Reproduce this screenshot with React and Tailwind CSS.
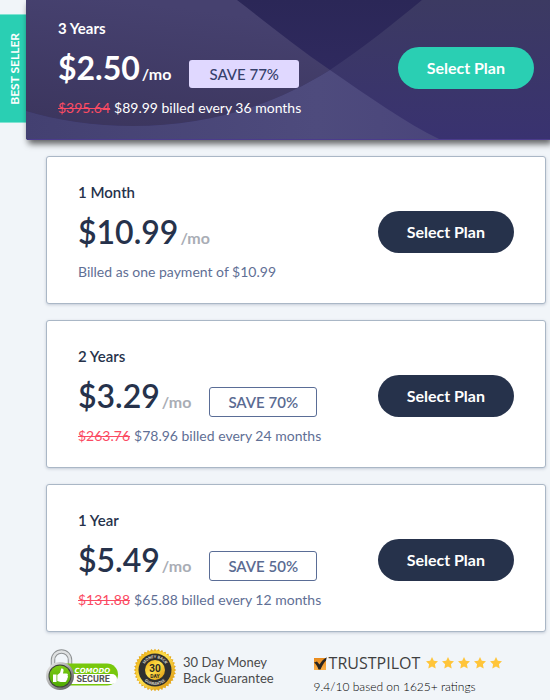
import { clsx } from "clsx";

const plans = [
  {
    id: "1m",
    title: "1 Month",
    price: "$10.99",
    detail: "Billed as one payment of $10.99",
  },
  {
    id: "2y",
    title: "2 Years",
    price: "$3.29",
    save: "SAVE 70%",
    oldPrice: "$263.76",
    detail: "$78.96 billed every 24 months",
  },
  {
    id: "1y",
    title: "1 Year",
    price: "$5.49",
    save: "SAVE 50%",
    oldPrice: "$131.88",
    detail: "$65.88 billed every 12 months",
  },
];

const bestPlan = {
  title: "3 Years",
  price: "$2.50",
  save: "SAVE 77%",
  oldPrice: "$395.64",
  detail: "$89.99 billed every 36 months",
};

const PlanBody = ({ plan, featured = false }) => (
  <div className="flex items-center justify-between">
    <div>
      <h2
        className={clsx(
          "text-[15px] leading-6",
          featured ? "font-bold text-white" : "font-semibold text-[#26324b]"
        )}
      >
        {plan.title}
      </h2>
      <div className="flex h-14 items-baseline">
        <span
          className={clsx(
            "text-[32px] leading-14",
            featured ? "font-bold text-white" : "font-semibold text-[#26324b]"
          )}
        >
          {plan.price}
        </span>
        <span
          className={clsx(
            "ml-0.5 text-base font-bold",
            featured ? "text-white" : "text-[#a9adb5]"
          )}
        >
          /mo
        </span>
        {plan.save && (
          <span
            className={clsx(
              "ml-[18px] rounded-[3px] text-[15px] leading-7",
              featured
                ? "bg-[#e0d8ff] px-5 font-medium text-[#36406b]"
                : "border border-[#5a6d96] px-[18px] font-semibold text-[#5a6b92]"
            )}
          >
            {plan.save}
          </span>
        )}
      </div>
      <p
        className={clsx(
          "text-sm leading-6",
          featured ? "text-white" : "text-[#5f6f95]"
        )}
      >
        {plan.oldPrice && (
          <s className="mr-1 text-[#fb4b63]">{plan.oldPrice}</s>
        )}
        {plan.detail}
      </p>
    </div>
    <button
      type="button"
      className={clsx(
        "h-[42px] rounded-full px-[29px] text-base font-bold text-white",
        featured ? "bg-[#2acfb3]" : "bg-[#26324b]"
      )}
    >
      Select Plan
    </button>
  </div>
);

const CardBackdrop = () => (
  <svg
    className="absolute inset-0 h-full w-full"
    viewBox="0 0 524 140"
    preserveAspectRatio="none"
    aria-hidden="true"
  >
    <defs>
      <linearGradient id="base" x1="0" y1="0" x2="0" y2="1">
        <stop offset="0" stopColor="#2b2757" />
        <stop offset="1" stopColor="#332c66" />
      </linearGradient>
      <linearGradient id="left" x1="0.3" y1="0" x2="0" y2="1">
        <stop offset="0" stopColor="#46416f" />
        <stop offset="1" stopColor="#3b355d" />
      </linearGradient>
      <linearGradient id="right" x1="0" y1="0" x2="0" y2="1">
        <stop offset="0" stopColor="#3c3a62" />
        <stop offset="1" stopColor="#393270" />
      </linearGradient>
      <linearGradient id="overlap" x1="0" y1="0" x2="1" y2="0">
        <stop offset="0" stopColor="#434071" />
        <stop offset="0.7" stopColor="#4e4b7d" />
        <stop offset="1" stopColor="#4a457b" />
      </linearGradient>
    </defs>
    <rect width="524" height="140" fill="url(#base)" />
    <path
      d="M396 0C368 23 337 48 304 70C240 110 175 126 107 126C68 126 30 120 0 111V140H524V0Z"
      fill="url(#right)"
    />
    <path d="M0 0H211C241 23 272 48 304 70C240 110 175 126 107 126C68 126 30 120 0 111Z" fill="url(#left)" />
    <path
      d="M0 111C30 120 68 126 107 126C175 126 240 110 304 70C342 96 378 122 415 140H0Z"
      fill="url(#overlap)"
    />
    <rect y="139" width="524" height="1" fill="#4b3b8c" />
  </svg>
);

const ComodoBadge = () => (
  <svg width="73" height="42" viewBox="0 0 73 42" role="img" aria-label="Comodo Secure">
    <defs>
      <linearGradient id="steel" x1="0" y1="0" x2="1" y2="1">
        <stop offset="0" stopColor="#f4f4f4" />
        <stop offset="0.5" stopColor="#a5a5a5" />
        <stop offset="1" stopColor="#4a4a4a" />
      </linearGradient>
      <linearGradient id="green" x1="0" y1="0" x2="0" y2="1">
        <stop offset="0" stopColor="#7ccb14" />
        <stop offset="1" stopColor="#4faa04" />
      </linearGradient>
    </defs>
    <path d="M7 19V12a8.500 8.500 0 0 1 17 0v7" fill="none" stroke="#8d9092" strokeWidth="4.500" />
    <path d="M7 19V12a8.500 8.500 0 0 1 17 0v7" fill="none" stroke="#dfe1e2" strokeWidth="2.500" />
    <path d="M18 15.500H61a11 11 0 0 1 0 22H18Z" fill="#78c80c" />
    <path d="M24 26H66a5 5 0 0 1 0 10H24Z" fill="#fff" />
    <circle cx="14" cy="28" r="14" fill="url(#steel)" />
    <circle cx="14" cy="28" r="11.500" fill="#3c4138" />
    <circle cx="14" cy="28" r="10.500" fill="url(#green)" />
    <path
      d="M7 26.500h3.500V34H7ZM11.300 27l2.800-2.200 1.100-4.300c1.800-.5 2.700.8 2.300 2.500l-.6 2.500h3.500c1.700 0 2 1.700 1 2.300 1 .6.700 2-.2 2.300.6.800.2 1.800-.7 2 .3 1-.3 1.900-1.500 1.900h-4.200c-1.500 0-2.200-.7-3.500-.9Z"
      fill="#fff"
    />
    <text x="28.500" y="24.500" fill="#fff" fontFamily="DejaVu Sans, sans-serif" fontSize="7" fontWeight="700" fontStyle="italic">
      COMODO
    </text>
    <text x="30.500" y="34.300" fill="#555" fontFamily="Liberation Sans Narrow, Roboto, sans-serif" fontSize="9" fontWeight="700">
      SECURE
    </text>
  </svg>
);

const teeth = Array.from({ length: 36 }, (_, i) => i * 10);

const MoneyBackSeal = () => (
  <svg width="44" height="44" viewBox="0 0 44 44" role="img" aria-label="30 day money back guarantee">
    <defs>
      <linearGradient id="gold" x1="0" y1="0" x2="1" y2="1">
        <stop offset="0" stopColor="#e9a70c" />
        <stop offset="0.45" stopColor="#ffe04a" />
        <stop offset="1" stopColor="#d98f0a" />
      </linearGradient>
      <path id="sealTop" d="M10 22a12 12 0 0 1 24 0" />
      <path id="sealBottom" d="M7 22a15 15 0 0 0 30 0" />
    </defs>
    {teeth.map((angle) => (
      <path key={angle} d="M20.200 3L22 .8L23.800 3Z" fill="#e5a91c" transform={`rotate(${angle} 22 22)`} />
    ))}
    <circle cx="22" cy="22" r="19.500" fill="url(#gold)" />
    <circle cx="22" cy="22" r="16.500" fill="#30302f" />
    <circle cx="22" cy="22" r="10" fill="url(#gold)" />
    <g fill="#d8d3c4" fontFamily="Roboto, sans-serif" fontSize="4" fontWeight="700" textAnchor="middle">
      <text>
        <textPath href="#sealTop" startOffset="50%">MONEY BACK</textPath>
      </text>
      <text>
        <textPath href="#sealBottom" startOffset="50%">GUARANTEE</textPath>
      </text>
    </g>
    <g fill="#2d2a22" fontFamily="Roboto, sans-serif" fontWeight="700" textAnchor="middle">
      <text x="22" y="23.500" fontSize="10">30</text>
      <text x="22" y="29.500" fontSize="5">DAY</text>
    </g>
  </svg>
);

const TrustpilotMark = () => (
  <svg width="13" height="13" viewBox="0 0 13 13" aria-hidden="true">
    <defs>
      <linearGradient id="orange" x1="0" y1="0" x2="0" y2="1">
        <stop offset="0" stopColor="#e98a1c" />
        <stop offset="1" stopColor="#fbb04a" />
      </linearGradient>
    </defs>
    <rect y="1" width="12" height="12" fill="url(#orange)" />
    <path
      d="M0 5.500L3 4.500L5.500 7.500C7.500 4.500 9.500 2 12.800.3L12 3.500C9.500 6 8 9 6.500 12.500H4.500C3.500 9.500 2 7 0 5.500Z"
      fill="#2b2622"
    />
  </svg>
);

const Star = () => (
  <svg width="12" height="12" viewBox="0 0 12 12" aria-hidden="true">
    <path
      d="M6 0L7.800 3.800L12 4.300L8.900 7.200L9.700 11.500L6 9.400L2.300 11.500L3.100 7.200L0 4.300L4.200 3.800Z"
      fill="#ffc53a"
    />
  </svg>
);

const App = () => {
  return (
    <main className="min-h-screen overflow-hidden bg-[#f1f5f9] font-[Lato,sans-serif]">
      {/* Best seller */}
      <section className="flex items-start">
        <div className="mt-3.5 flex h-[109px] w-[26px] items-center justify-center border-y border-[#7fe3d2] bg-[#2acfb3]">
          <span className="ml-1 rotate-180 text-xs font-bold text-white [writing-mode:vertical-rl]">
            BEST SELLER
          </span>
        </div>
        <div className="relative flex-1 overflow-hidden rounded-bl-[3px] shadow-[2px_4px_6px_rgba(0,0,0,0.6)]">
          <CardBackdrop />
          <div className="relative pt-4 pr-4 pb-5 pl-8">
            <PlanBody plan={bestPlan} featured />
          </div>
        </div>
      </section>

      {/* Other plans */}
      <div className="mt-4 mr-1 ml-[46px] space-y-4">
        {plans.map((plan) => (
          <section
            key={plan.id}
            className="rounded-[3px] border border-[#aab7c6] bg-white px-[31px] pt-[23px] pb-[19px] shadow-[0_1px_3px_rgba(60,80,110,0.25)]"
          >
            <PlanBody plan={plan} />
          </section>
        ))}
      </div>

      {/* Trust badges */}
      <footer className="mt-4 ml-[46px] flex items-start">
        <ComodoBadge />
        <div className="ml-3.5 flex items-center gap-1.5">
          <MoneyBackSeal />
          <p className="text-[13px] leading-4 whitespace-nowrap text-[#4a4a4a]">
            30 Day Money
            <br />
            Back Guarantee
          </p>
        </div>
        <div className="ml-10 pt-[3px]">
          <div className="flex items-center">
            <TrustpilotMark />
            <span className="ml-0.5 font-['Open_Sans',sans-serif] text-base leading-6 text-[#3f3f3f]">
              TRUSTPILOT
            </span>
            <div className="ml-1.5 flex gap-1">
              {[1, 2, 3, 4, 5].map((star) => (
                <Star key={star} />
              ))}
            </div>
          </div>
          <p className="text-xs leading-6 font-light whitespace-nowrap text-black">
            9.4/10 based on 1625+ ratings
          </p>
        </div>
      </footer>
    </main>
  );
};

export default App;
